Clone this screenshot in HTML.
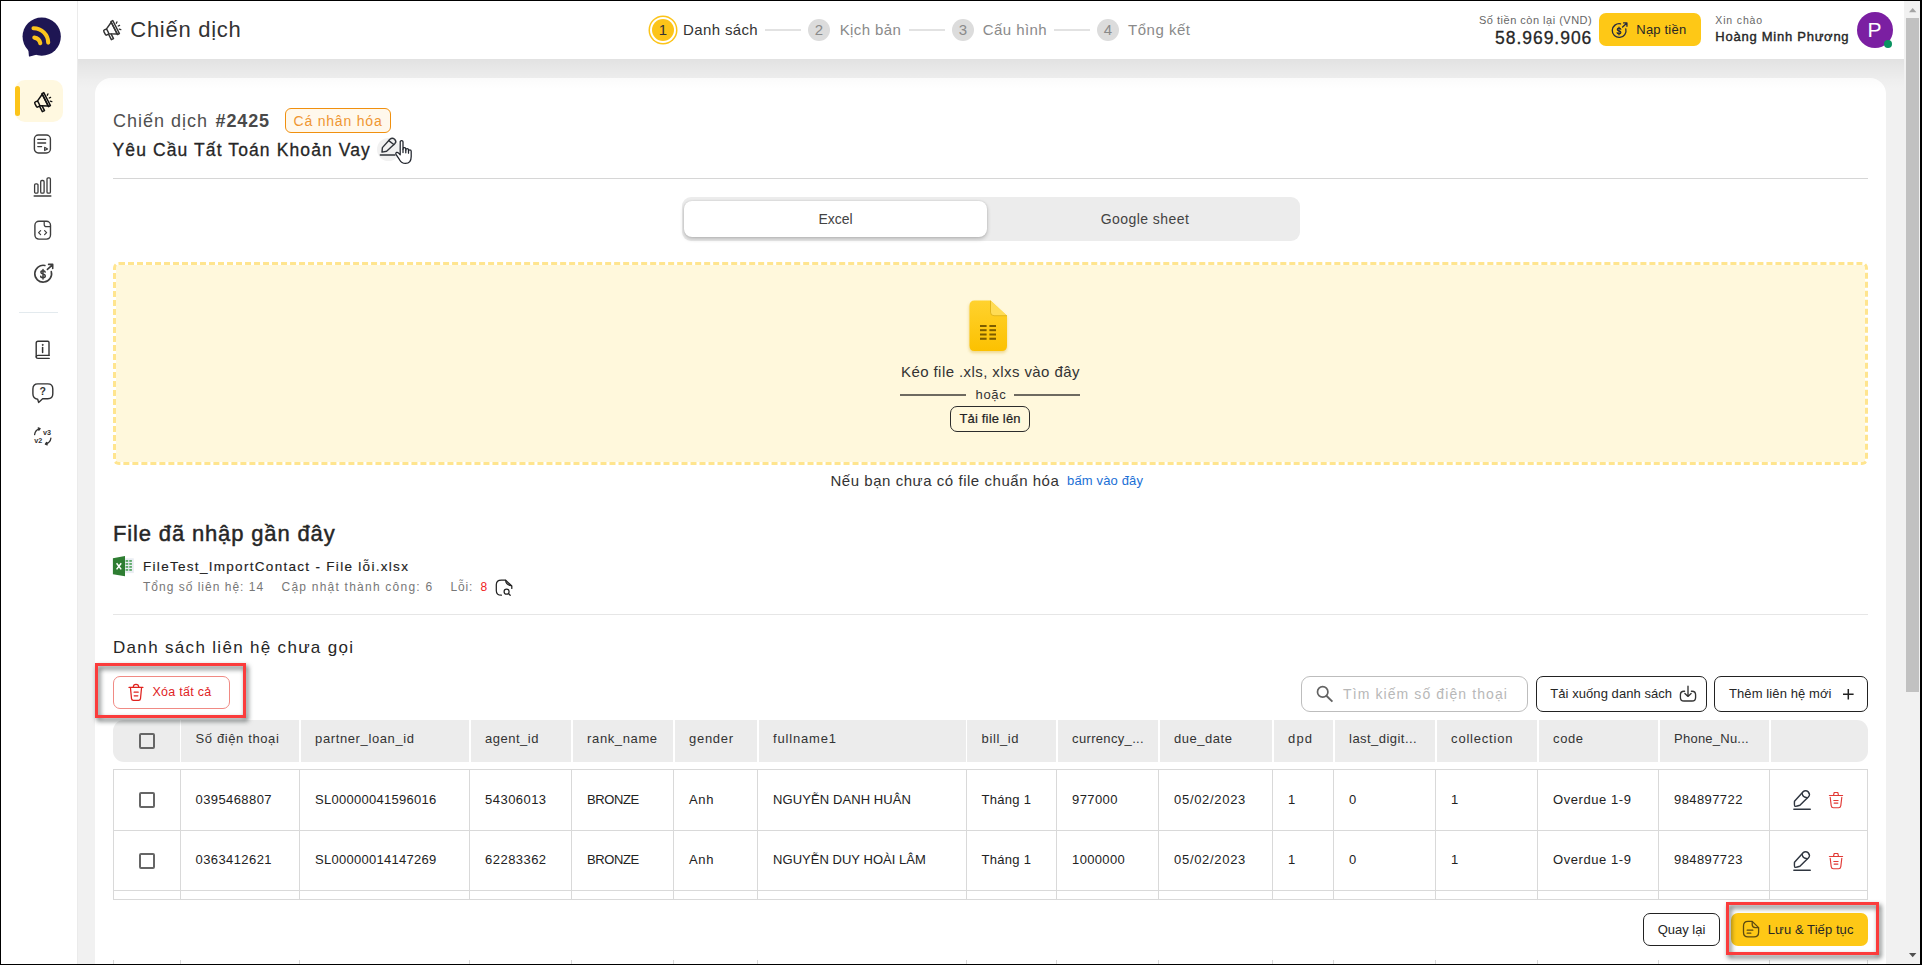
<!DOCTYPE html>
<html lang="vi">
<head>
<meta charset="utf-8">
<title>Chiến dịch</title>
<style>
*{box-sizing:border-box;margin:0;padding:0}
html,body{width:1922px;height:965px;overflow:hidden;background:#fff}
body{font-family:"Liberation Sans",sans-serif;color:#262626;position:relative}
.a{position:absolute}
.t{position:absolute;white-space:nowrap;line-height:20px;height:20px}
svg{display:block;overflow:visible}
.cb{width:16px;height:16px;border:2px solid #666;border-radius:2px}
.th{font-size:13px;color:#333}
.td{font-size:13px;color:#222}
/* frame */
#frame-t{left:0;top:0;width:1922px;height:1px;background:#000;z-index:50}
#frame-l{left:0;top:0;width:1px;height:965px;background:#000;z-index:50}
#frame-b{left:0;top:964px;width:1922px;height:1px;background:#000;z-index:50}
#frame-r{left:1920px;top:0;width:2px;height:965px;background:#000;z-index:50}
/* layout */
#main{left:78px;top:1px;width:1826px;height:963px;background:#f1f1f1}
#side{left:1px;top:1px;width:77px;height:963px;background:#fff;border-right:1px solid #ebebeb;z-index:5}
#head{left:78px;top:1px;width:1826px;height:58px;background:#fff;z-index:4}
#hshadow{left:78px;top:59px;width:1826px;height:30px;background:linear-gradient(rgba(0,0,0,.062),rgba(0,0,0,.034) 38%,rgba(0,0,0,.01) 72%,rgba(0,0,0,0));z-index:3}
#card{left:95px;top:78px;width:1791px;height:900px;background:#fff;border-radius:16px}
/* scrollbar */
#sb{left:1904px;top:1px;width:16px;height:963px;background:#f1f1f1;z-index:40}
#sbthumb{left:1906px;top:18px;width:13px;height:674px;background:#c1c1c1;z-index:41}
</style>
</head>
<body>
<div class="a" id="main"></div>
<div class="a" id="card"></div>
<div class="a" id="hshadow"></div>
<div class="a" id="head"></div>
<div class="a" id="side"></div>

<!-- SIDEBAR -->
<div class="a" style="left:0;top:0;z-index:6">
<!-- logo -->
<svg class="a" style="left:21px;top:16px" width="42" height="42" viewBox="0 0 42 42">
<path d="M8 33.5 L8.6 39.9 L15 38 Z" fill="#1e1653" stroke="#1e1653" stroke-width="1.4" stroke-linejoin="round"/>
<circle cx="20.7" cy="20.6" r="19.15" fill="#1e1653"/>
<path d="M12.5 12.2 A14.5 14.5 0 0 1 27.2 26.6" fill="none" stroke="#fcc41c" stroke-width="4.1" stroke-linecap="round"/>
<path d="M13.3 21.6 A7.2 7.2 0 0 1 19.3 27.2" fill="none" stroke="#fcc41c" stroke-width="4.1" stroke-linecap="round"/>
</svg>
<!-- active item -->
<div class="a" style="left:15px;top:80px;width:48px;height:42px;border-radius:10px;background:#fff8e0"></div>
<div class="a" style="left:15px;top:86px;width:5px;height:30px;border-radius:3px;background:#fcc419"></div>
<svg class="a" style="left:33px;top:91px" width="20" height="20" viewBox="0 0 20 20" fill="none" stroke="#111" stroke-width="1.5" stroke-linecap="round" stroke-linejoin="round">
<g id="mega"><g transform="rotate(-27 10 10)">
<rect x="1.6" y="7.4" width="3.6" height="5.6" rx="1.2"/>
<path d="M5.2 7.4 L12.4 3.6 L12.4 16.8 L5.2 13"/>
<path d="M14.5 2.9 L14.5 17.5 L12.4 17.5 L12.4 2.9 Z"/>
<path d="M4.6 13.2 L4.6 19.2 L7 19.2 L7 14.2"/>
<path d="M16.4 6.9 L17.6 5.9 M16.9 10.2 L18.4 10.2 M16.4 13.5 L17.6 14.5" stroke-width="1.3"/>
</g></g>
</svg>
<!-- script icon -->
<svg class="a" style="left:33px;top:134px" width="19" height="20" viewBox="0 0 19 20" fill="none" stroke="#3d3d3d" stroke-width="1.4" stroke-linecap="round" stroke-linejoin="round">
<rect x="1.4" y="1" width="16" height="18" rx="4"/>
<path d="M4.8 5.4 H12.6 M4.8 9 H12.6 M4.8 12.6 H8.6"/>
<path d="M11.6 13.2 L14.6 14.9 L11.6 16.6 Z" stroke-width="1.1"/>
</svg>
<!-- chart icon -->
<svg class="a" style="left:33px;top:177px" width="19" height="20" viewBox="0 0 19 20" fill="none" stroke="#3d3d3d" stroke-width="1.3" stroke-linecap="round" stroke-linejoin="round">
<rect x="1.6" y="6.8" width="3.4" height="9.4" rx="1.2"/>
<rect x="7.7" y="3.5" width="3.4" height="12.7" rx="1.2"/>
<rect x="14" y="0.9" width="3.4" height="15.3" rx="1.2"/>
<path d="M1.2 19 H17.8" stroke-width="1.5"/>
</svg>
<!-- code icon -->
<svg class="a" style="left:33px;top:220px" width="19" height="20" viewBox="0 0 19 20" fill="none" stroke="#3d3d3d" stroke-width="1.4" stroke-linecap="round" stroke-linejoin="round">
<rect x="1.9" y="1.3" width="15.6" height="17.8" rx="4"/>
<path d="M11.2 1.5 V4.4 Q11.2 6.6 13.4 6.6 H17.3" stroke-width="1.2"/>
<path d="M7.6 10.6 L5.6 12.6 L7.6 14.6 M11.6 10.6 L13.6 12.6 L11.6 14.6" stroke-width="1.2"/>
</svg>
<!-- dollar icon -->
<svg class="a" style="left:32px;top:262px" width="22" height="22" viewBox="0 0 22 22" fill="none" stroke="#3d3d3d" stroke-width="1.6" stroke-linecap="round" stroke-linejoin="round">
<path d="M19.3 9.6 A8.4 8.4 0 1 1 12.9 3.5"/>
<path d="M15.4 7.4 L20.4 2.8 M16.6 2.4 H20.7 V6.5"/>
<path d="M13.2 10.1 Q13 8.7 11 8.7 Q8.9 8.7 8.9 10.3 Q8.9 11.6 11 12.1 Q13.3 12.6 13.3 14.1 Q13.3 15.7 11 15.7 Q8.8 15.7 8.7 14.2 M11 7.5 V16.9" stroke-width="1.5"/>
</svg>
<div class="a" style="left:19px;top:312px;width:39px;height:1px;background:#e3eaee"></div>
<!-- book icon -->
<svg class="a" style="left:34px;top:340px" width="17" height="20" viewBox="0 0 17 20" fill="none" stroke="#333" stroke-width="1.4" stroke-linecap="round" stroke-linejoin="round">
<path d="M15 15.4 H4 Q2.2 15.4 2.2 17 Q2.2 18.4 4 18.4 H15.2"/>
<path d="M2.2 17 V3 Q2.2 1.2 4 1.2 H13.8 Q15 1.2 15 2.4 V15.4"/>
<path d="M8.6 7.6 V12.4" stroke-width="1.5"/><circle cx="8.6" cy="4.9" r="0.5" fill="#333" stroke-width="0.8"/>
</svg>
<!-- help icon -->
<svg class="a" style="left:32px;top:383px" width="22" height="21" viewBox="0 0 22 21" fill="none" stroke="#333" stroke-width="1.4" stroke-linecap="round" stroke-linejoin="round">
<path d="M5.9 0.9 H15.8 Q20.8 0.9 20.8 5.9 V10.8 Q20.8 15.8 15.8 15.8 H10.6 L6.6 19.4 L5.7 16.2 Q0.9 15.8 0.9 10.8 V5.9 Q0.9 0.9 5.9 0.9 Z"/>
<text x="10.6" y="12.4" font-family="Liberation Sans, sans-serif" font-size="10.5" font-weight="700" text-anchor="middle" fill="#333" stroke="none">?</text>
</svg>
<!-- version icon -->
<svg class="a" style="left:33px;top:427px" width="20" height="19" viewBox="0 0 20 19" fill="none" stroke="#333" stroke-width="1.4" stroke-linecap="round" stroke-linejoin="round">
<path d="M1.6 7.6 Q2.2 3 6.8 1.7 M5.2 0.9 L7.1 1.6 L5.9 3.2" stroke-width="1.3"/>
<path d="M17.9 11.2 Q17.3 15.8 12.7 17 M14.3 17.8 L12.4 17.1 L13.6 15.5" stroke-width="1.3"/>
<text x="13.9" y="7.6" font-family="Liberation Sans, sans-serif" font-size="7.2" font-weight="700" text-anchor="middle" fill="#333" stroke="none">v3</text>
<text x="5.3" y="16.2" font-family="Liberation Sans, sans-serif" font-size="7.2" font-weight="700" text-anchor="middle" fill="#333" stroke="none">v2</text>
</svg>
</div>
<!-- HEADER -->
<div class="a" style="left:0;top:0;z-index:7">
<svg class="a" style="left:102px;top:19.2px" width="20" height="20" viewBox="0 0 20 20" fill="none" stroke="#333" stroke-width="1.45" stroke-linecap="round" stroke-linejoin="round"><use href="#mega"/></svg>
<div class="t" style="left:130.3px;top:19.6px;font-size:22px;letter-spacing:0.72px;color:#333">Chiến dịch</div>
<!-- stepper -->
<div class="a" style="left:651.8px;top:19px;width:22px;height:22px;border-radius:50%;background:#fcc419;box-shadow:0 0 0 2px #fff,0 0 0 3.5px #fcc419"></div>
<div class="t" style="left:652.8px;top:20px;width:20px;text-align:center;font-size:15px;color:#333">1</div>
<div class="t" style="left:683px;top:20px;font-size:15px;letter-spacing:0.37px;color:#333">Danh sách</div>
<div class="a" style="left:765px;top:29px;width:36px;height:2px;background:#e2e2e2"></div>
<div class="a" style="left:808px;top:19px;width:22px;height:22px;border-radius:50%;background:#dcdcdc"></div>
<div class="t" style="left:809px;top:20px;width:20px;text-align:center;font-size:15px;color:#8a8a8a">2</div>
<div class="t" style="left:839.7px;top:20px;font-size:15px;letter-spacing:0.39px;color:#8a8a8a">Kịch bản</div>
<div class="a" style="left:909px;top:29px;width:36px;height:2px;background:#e2e2e2"></div>
<div class="a" style="left:952px;top:19px;width:22px;height:22px;border-radius:50%;background:#dcdcdc"></div>
<div class="t" style="left:953px;top:20px;width:20px;text-align:center;font-size:15px;color:#8a8a8a">3</div>
<div class="t" style="left:982.7px;top:20px;font-size:15px;letter-spacing:0.44px;color:#8a8a8a">Cấu hình</div>
<div class="a" style="left:1054px;top:29px;width:36px;height:2px;background:#e2e2e2"></div>
<div class="a" style="left:1097px;top:19px;width:22px;height:22px;border-radius:50%;background:#dcdcdc"></div>
<div class="t" style="left:1098px;top:20px;width:20px;text-align:center;font-size:15px;color:#8a8a8a">4</div>
<div class="t" style="left:1128px;top:20px;font-size:15px;letter-spacing:0.52px;color:#8a8a8a">Tổng kết</div>
<!-- right -->
<div class="t" style="left:1479px;top:10px;font-size:11px;letter-spacing:0.5px;color:#666">Số tiền còn lại (VND)</div>
<div class="t" style="left:1495px;top:28.2px;font-size:17.5px;letter-spacing:0.97px;color:#262626;-webkit-text-stroke:0.3px #262626">58.969.906</div>
<div class="a" style="left:1599px;top:13px;width:102px;height:33px;border-radius:7px;background:#fec816"></div>
<svg class="a" style="left:1610.3px;top:21px" width="18" height="18" viewBox="0 0 22 22" fill="none" stroke="#262a40" stroke-width="1.6" stroke-linecap="round" stroke-linejoin="round">
<path d="M19.3 9.6 A8.4 8.4 0 1 1 12.9 3.5"/>
<path d="M15.4 7.4 L20.4 2.8 M16.6 2.4 H20.7 V6.5"/>
<path d="M13.2 10.1 Q13 8.7 11 8.7 Q8.9 8.7 8.9 10.3 Q8.9 11.6 11 12.1 Q13.3 12.6 13.3 14.1 Q13.3 15.7 11 15.7 Q8.8 15.7 8.7 14.2 M11 7.5 V16.9" stroke-width="1.5"/>
</svg>
<div class="t" style="left:1636.3px;top:19.6px;font-size:13px;letter-spacing:0.2px;color:#262626">Nạp tiền</div>
<div class="t" style="left:1715.3px;top:10.2px;font-size:10.5px;letter-spacing:0.85px;color:#666">Xin chào</div>
<div class="t" style="left:1715.3px;top:26.5px;font-size:13px;letter-spacing:0.75px;color:#262626;-webkit-text-stroke:0.4px #262626">Hoàng Minh Phương</div>
<div class="a" style="left:1856.5px;top:12px;width:36px;height:36px;border-radius:50%;background:#7b1fa2"></div>
<div class="t" style="left:1856.5px;top:18px;width:36px;height:24px;line-height:24px;text-align:center;font-size:21px;color:#fff">P</div>
<div class="a" style="left:1884.3px;top:39.5px;width:8px;height:8px;border-radius:50%;background:#0a9361"></div>
</div>
<!-- CARD-TOP -->
<div class="t" style="left:113px;top:111px;font-size:18px;letter-spacing:0.99px;color:#505050">Chiến dịch</div>
<div class="t" style="left:215.5px;top:111px;font-size:18px;letter-spacing:0.88px;color:#4a4a4a;font-weight:700">#2425</div>
<div class="a" style="left:285px;top:108px;width:106px;height:25px;border-radius:6px;border:1.5px solid #f0900f;background:#fff8ec"></div>
<div class="t" style="left:293.5px;top:110.5px;font-size:14px;letter-spacing:0.8px;color:#ef9632">Cá nhân hóa</div>
<div class="t" style="left:112.5px;top:139.8px;font-size:17.5px;letter-spacing:1.11px;color:#262626;-webkit-text-stroke:0.3px #262626">Yêu Cầu Tất Toán Khoản Vay</div>
<div class="a" style="left:377px;top:138px;width:23px;height:23px;border-radius:50%;background:#f1f1f1"></div>
<svg class="a" style="left:379px;top:137px" width="19" height="20" viewBox="0 0 19 20" fill="none" stroke="#30343a" stroke-width="1.4" stroke-linecap="round" stroke-linejoin="round">
<path d="M3 15.1 L3.4 10.6 L10.9 2.3 Q13.2 0.2 15.6 2.2 Q17.8 4.4 16 6.4 L7.6 14.2 Z"/>
<path d="M9.7 3.6 L14.8 7.5"/>
<path d="M1.3 18 H15.9"/>
</svg>
<svg class="a" style="left:395px;top:140px" width="18" height="25" viewBox="0 0 18 25" fill="#fff" stroke="#20242c" stroke-width="1.25" stroke-linejoin="round" stroke-linecap="round">
<path d="M5.2 1.8 Q5.2 0.6 6.6 0.6 Q8 0.6 8 1.8 V9.2 Q8 7.7 9.4 7.7 Q10.8 7.7 10.8 9.2 V10.1 Q10.8 8.7 12.2 8.7 Q13.5 8.7 13.5 10.1 V11.1 Q13.5 9.8 14.8 9.8 Q16.2 9.8 16.2 11.2 V16.5 Q16.2 23.4 10.5 23.4 Q6.5 23.4 4.5 19.7 L1 14.4 Q0.3 13 1.5 12.4 Q2.6 12 3.6 13.1 L5.2 14.9 Z"/>
<path d="M8 9.2 V12.6 M10.8 10.1 V12.8 M13.5 11.1 V13.2" fill="none"/>
</svg>
<div class="a" style="left:113px;top:178px;width:1755px;height:1px;background:#d6d6d6"></div>
<!-- segmented -->
<div class="a" style="left:682px;top:197px;width:618px;height:44px;border-radius:9px;background:#ececec"></div>
<div class="a" style="left:684px;top:201px;width:303px;height:36px;border-radius:8px;background:#fff;box-shadow:0 2px 4px rgba(0,0,0,.22),0 0 2px rgba(0,0,0,.12)"></div>
<div class="t" style="left:684px;top:209px;width:303px;text-align:center;font-size:14px;color:#434343">Excel</div>
<div class="t" style="left:990px;top:209px;width:310px;text-align:center;font-size:14px;letter-spacing:0.43px;color:#434343">Google sheet</div>
<!-- DROPZONE -->
<div class="a" style="left:113px;top:262px;width:1755px;height:203px;border-radius:6px;border:3px dashed #ffe58f;background:#fff8dc;background-clip:padding-box"></div>
<svg class="a" style="left:963px;top:295px" width="50" height="64" viewBox="0 0 50 64">
<defs><linearGradient id="fg" x1="0" y1="0" x2="0" y2="1"><stop offset="0" stop-color="#ffd22e"/><stop offset="1" stop-color="#fcc100"/></linearGradient>
<filter id="fs" x="-30%" y="-30%" width="160%" height="160%"><feGaussianBlur stdDeviation="1.6"/></filter></defs>
<path d="M11.5 6 H27.5 L44 21 V51 Q44 56.5 38.5 56.5 H11.5 Q6 56.5 6 51 V11.5 Q6 6 11.5 6Z" fill="#d9b030" opacity=".45" filter="url(#fs)" transform="translate(0 1.5)"/>
<path d="M11.5 5.6 H27.5 L44 20.7 V50.5 Q44 56 38.5 56 H11.5 Q6.5 56 6.5 50.5 V11.1 Q6.5 5.6 11.5 5.6Z" fill="url(#fg)"/>
<path d="M27.5 5.6 L44 20.7 H31 Q27.5 20.7 27.5 17.2Z" fill="#ffdc55"/>
<path d="M27.5 5.6 V17.2 Q27.5 20.7 31 20.7 H44" fill="none" stroke="#c99a00" stroke-opacity=".55" stroke-width="1"/>
<g fill="#7c5d00"><rect x="17" y="30" width="6.6" height="2"/><rect x="26.4" y="30" width="6.6" height="2"/><rect x="17" y="34.2" width="6.6" height="2"/><rect x="26.4" y="34.2" width="6.6" height="2"/><rect x="17" y="38.5" width="6.6" height="2"/><rect x="26.4" y="38.5" width="6.6" height="2"/><rect x="17" y="42.7" width="6.6" height="2.1"/><rect x="26.4" y="42.7" width="6.6" height="2.1"/></g>
</svg>
<div class="t" style="left:901px;top:362px;font-size:15px;letter-spacing:0.42px;color:#333">Kéo file .xls, xlxs vào đây</div>
<div class="a" style="left:900px;top:394px;width:66px;height:2px;background:#6e6a60"></div>
<div class="a" style="left:1014px;top:394px;width:66px;height:2px;background:#6e6a60"></div>
<div class="t" style="left:975.5px;top:385px;font-size:13px;letter-spacing:0.7px;color:#333">hoặc</div>
<div class="a" style="left:950px;top:406px;width:80px;height:26px;border-radius:7px;border:1.5px solid #2c2c2c"></div>
<div class="t" style="left:959.5px;top:409px;font-size:13px;letter-spacing:0.16px;color:#222;-webkit-text-stroke:0.2px #222">Tải file lên</div>
<div class="t" style="left:830.5px;top:471px;font-size:15px;letter-spacing:0.54px;color:#333">Nếu bạn chưa có file chuẩn hóa</div>
<div class="t" style="left:1067px;top:470.5px;font-size:13px;letter-spacing:0.15px;color:#1a6fd6">bấm vào đây</div>
<!-- RECENT -->
<div class="t" style="left:113px;top:521px;height:26px;line-height:26px;font-size:22px;letter-spacing:0.85px;color:#262626;-webkit-text-stroke:0.45px #262626">File đã nhập gần đây</div>
<svg class="a" style="left:112px;top:555px" width="23" height="22" viewBox="0 0 23 22">
<rect x="12" y="3.3" width="9.8" height="14.8" fill="#e9edf2"/>
<g fill="#3d9a48"><rect x="13.6" y="5.2" width="2.6" height="1.5"/><rect x="17.3" y="5.2" width="2.6" height="1.5"/><rect x="13.6" y="8.2" width="2.6" height="1.5"/><rect x="17.3" y="8.2" width="2.6" height="1.5"/><rect x="13.6" y="11.2" width="2.6" height="1.5"/><rect x="17.3" y="11.2" width="2.6" height="1.5"/><rect x="13.6" y="14.2" width="2.6" height="1.5"/><rect x="17.3" y="14.2" width="2.6" height="1.5"/></g>
<path d="M0.9 3.3 L13 1 V21.3 L0.9 19.2Z" fill="#2e7d32"/>
<path d="M4.6 8.2 L9.2 14.4 M9.2 8.2 L4.6 14.4" stroke="#fff" stroke-width="1.5" fill="none"/>
</svg>
<div class="t" style="left:143px;top:557px;font-size:13.5px;letter-spacing:1.3px;color:#222;-webkit-text-stroke:0.15px #222">FileTest_ImportContact - File lỗi.xlsx</div>
<div class="t" style="left:143px;top:577px;font-size:12px;letter-spacing:1px;color:#777">Tổng số liên hệ: 14</div>
<div class="t" style="left:281.5px;top:577px;font-size:12px;letter-spacing:1.23px;color:#777">Cập nhật thành công: 6</div>
<div class="t" style="left:450.5px;top:577px;font-size:12px;letter-spacing:0.8px;color:#777">Lỗi:</div>
<div class="t" style="left:480.5px;top:577px;font-size:12px;color:#f02222">8</div>
<svg class="a" style="left:495px;top:578.7px" width="19" height="18" viewBox="0 0 19 18" fill="none" stroke="#222" stroke-width="1.25" stroke-linecap="round" stroke-linejoin="round">
<path d="M6.4 16.2 Q1.3 16.2 1.3 11.4 V5.8 Q1.3 1 6.4 1 H10.4 L16.8 7 V9.4"/>
<path d="M10.6 1.4 Q10.8 5.6 16.4 6.8" stroke-width="1.1"/>
<circle cx="11.6" cy="12.7" r="2.5"/><path d="M13.5 14.6 L15.2 16.3"/>
</svg>
<div class="a" style="left:113px;top:614px;width:1755px;height:1px;background:#e6e6e6"></div>
<div class="t" style="left:113px;top:637.5px;font-size:17px;letter-spacing:1.32px;color:#262626">Danh sách liên hệ chưa gọi</div>
<!-- LIST-TOOLS -->
<div class="a" style="left:113px;top:676px;width:117px;height:33px;border-radius:7px;border:1px solid #f08a84;background:#fff"></div>
<svg class="a" id="trash0" style="left:128px;top:683px" width="16" height="19" viewBox="0 0 16 19" fill="none" stroke="#e0231f" stroke-width="1.25" stroke-linecap="round" stroke-linejoin="round">
<path d="M1 4.4 H14.9"/><path d="M5.2 4.2 Q5.4 1.3 8 1.3 Q10.6 1.3 10.8 4.2" />
<path d="M2.5 5.2 L3.5 15.6 Q3.7 17.3 5.4 17.3 H10.6 Q12.3 17.3 12.5 15.6 L13.5 5.2"/>
<path d="M6.1 9.2 H10.2 M6.2 12.8 H9.8"/>
</svg>
<div class="t" style="left:152.5px;top:682px;font-size:12.5px;letter-spacing:0.28px;color:#e0231f">Xóa tất cả</div>
<div class="a" style="left:95px;top:663px;width:151px;height:55px;border:3px solid #fb3c3c;filter:drop-shadow(2px 3px 2.5px rgba(20,30,30,.7));z-index:30"></div>
<!-- search -->
<div class="a" style="left:1301px;top:676px;width:227px;height:36px;border-radius:9px;border:1px solid #bdbdbd;background:#fff"></div>
<svg class="a" style="left:1315px;top:684px" width="20" height="20" viewBox="0 0 20 20" fill="none" stroke="#636363" stroke-width="1.7" stroke-linecap="butt"><circle cx="7.7" cy="7.9" r="5.2"/><path d="M11.4 11.7 L17.4 17.6" stroke-width="1.9"/></svg>
<div class="t" style="left:1343px;top:684px;font-size:14px;letter-spacing:1.1px;color:#b8b8b8">Tìm kiếm số điện thoại</div>
<!-- download -->
<div class="a" style="left:1536px;top:676px;width:171px;height:36px;border-radius:7px;border:1.5px solid #222;background:#fff"></div>
<div class="t" style="left:1550.3px;top:684px;font-size:13px;letter-spacing:0.06px;color:#262626">Tải xuống danh sách</div>
<svg class="a" style="left:1679px;top:685px" width="18" height="18" viewBox="0 0 18 18" fill="none" stroke="#333" stroke-width="1.35" stroke-linecap="round" stroke-linejoin="round">
<path d="M5.6 6.2 H5 Q1.4 6.2 1.4 9.8 V12.4 Q1.4 16 5 16 H13 Q16.6 16 16.6 12.4 V9.8 Q16.6 6.2 13 6.2 H12.4"/>
<path d="M9 1.2 V11.2 M5.9 8.4 L9 11.4 L12.1 8.4"/>
</svg>
<!-- add -->
<div class="a" style="left:1714px;top:676px;width:154px;height:36px;border-radius:7px;border:1.5px solid #222;background:#fff"></div>
<div class="t" style="left:1729px;top:684px;font-size:13px;letter-spacing:0.1px;color:#262626">Thêm liên hệ mới</div>
<svg class="a" style="left:1843px;top:689px" width="11" height="11" viewBox="0 0 11 11" fill="none" stroke="#222" stroke-width="1.5"><path d="M5.3 0 V10.6 M0 5.3 H10.6"/></svg>
<!-- TABLE -->
<div class="a" style="left:113px;top:719.5px;width:1754.5px;height:42px;border-radius:11px;background:#ececec"></div>
<div class="a" style="left:179.5px;top:719px;width:1.5px;height:43px;background:#fff"></div><div class="a" style="left:299.0px;top:719px;width:1.5px;height:43px;background:#fff"></div><div class="a" style="left:469.0px;top:719px;width:1.5px;height:43px;background:#fff"></div><div class="a" style="left:571.0px;top:719px;width:1.5px;height:43px;background:#fff"></div><div class="a" style="left:673.0px;top:719px;width:1.5px;height:43px;background:#fff"></div><div class="a" style="left:757.0px;top:719px;width:1.5px;height:43px;background:#fff"></div><div class="a" style="left:965.5px;top:719px;width:1.5px;height:43px;background:#fff"></div><div class="a" style="left:1056.0px;top:719px;width:1.5px;height:43px;background:#fff"></div><div class="a" style="left:1158.0px;top:719px;width:1.5px;height:43px;background:#fff"></div><div class="a" style="left:1272.0px;top:719px;width:1.5px;height:43px;background:#fff"></div><div class="a" style="left:1333.0px;top:719px;width:1.5px;height:43px;background:#fff"></div><div class="a" style="left:1435.0px;top:719px;width:1.5px;height:43px;background:#fff"></div><div class="a" style="left:1537.0px;top:719px;width:1.5px;height:43px;background:#fff"></div><div class="a" style="left:1658.0px;top:719px;width:1.5px;height:43px;background:#fff"></div><div class="a" style="left:1769.0px;top:719px;width:1.5px;height:43px;background:#fff"></div>
<div class="a cb" style="left:139px;top:733px"></div>
<div class="t th" style="left:195.6px;top:728.7px;letter-spacing:0.61px">Số điện thoại</div><div class="t th" style="left:315.1px;top:728.7px;letter-spacing:0.61px">partner_loan_id</div><div class="t th" style="left:485.1px;top:728.7px;letter-spacing:0.49px">agent_id</div><div class="t th" style="left:587.1px;top:728.7px;letter-spacing:0.62px">rank_name</div><div class="t th" style="left:689.1px;top:728.7px;letter-spacing:0.68px">gender</div><div class="t th" style="left:773.1px;top:728.7px;letter-spacing:0.82px">fullname1</div><div class="t th" style="left:981.6px;top:728.7px;letter-spacing:0.61px">bill_id</div><div class="t th" style="left:1072.1px;top:728.7px;letter-spacing:0.33px">currency_...</div><div class="t th" style="left:1174.1px;top:728.7px;letter-spacing:0.52px">due_date</div><div class="t th" style="left:1288.1px;top:728.7px;letter-spacing:1.1px">dpd</div><div class="t th" style="left:1349.1px;top:728.7px;letter-spacing:0.45px">last_digit...</div><div class="t th" style="left:1451.1px;top:728.7px;letter-spacing:0.79px">collection</div><div class="t th" style="left:1553.1px;top:728.7px;letter-spacing:0.6px">code</div><div class="t th" style="left:1674.1px;top:728.7px;letter-spacing:0.23px">Phone_Nu...</div>
<div class="a" style="left:113px;top:769px;width:1755px;height:131px;border:1px solid #d9d9d9;overflow:hidden"></div>
<div class="a" style="left:179.5px;top:769px;width:1px;height:131px;background:#d9d9d9"></div><div class="a" style="left:299.0px;top:769px;width:1px;height:131px;background:#d9d9d9"></div><div class="a" style="left:469.0px;top:769px;width:1px;height:131px;background:#d9d9d9"></div><div class="a" style="left:571.0px;top:769px;width:1px;height:131px;background:#d9d9d9"></div><div class="a" style="left:673.0px;top:769px;width:1px;height:131px;background:#d9d9d9"></div><div class="a" style="left:757.0px;top:769px;width:1px;height:131px;background:#d9d9d9"></div><div class="a" style="left:965.5px;top:769px;width:1px;height:131px;background:#d9d9d9"></div><div class="a" style="left:1056.0px;top:769px;width:1px;height:131px;background:#d9d9d9"></div><div class="a" style="left:1158.0px;top:769px;width:1px;height:131px;background:#d9d9d9"></div><div class="a" style="left:1272.0px;top:769px;width:1px;height:131px;background:#d9d9d9"></div><div class="a" style="left:1333.0px;top:769px;width:1px;height:131px;background:#d9d9d9"></div><div class="a" style="left:1435.0px;top:769px;width:1px;height:131px;background:#d9d9d9"></div><div class="a" style="left:1537.0px;top:769px;width:1px;height:131px;background:#d9d9d9"></div><div class="a" style="left:1658.0px;top:769px;width:1px;height:131px;background:#d9d9d9"></div><div class="a" style="left:1769.0px;top:769px;width:1px;height:131px;background:#d9d9d9"></div>
<div class="a" style="left:113px;top:829.5px;width:1755px;height:1px;background:#d9d9d9"></div><div class="a" style="left:113px;top:890px;width:1755px;height:1px;background:#d9d9d9"></div>
<div class="a cb" style="left:139px;top:792px"></div><div class="t td" style="left:195.6px;top:789.8px;letter-spacing:0.4px">0395468807</div><div class="t td" style="left:315.1px;top:789.8px;letter-spacing:0.27px">SL00000041596016</div><div class="t td" style="left:485.1px;top:789.8px;letter-spacing:0.45px">54306013</div><div class="t td" style="left:587.1px;top:789.8px;letter-spacing:-0.43px">BRONZE</div><div class="t td" style="left:689.1px;top:789.8px;letter-spacing:0.58px">Anh</div><div class="t td" style="left:773.1px;top:789.8px;letter-spacing:0.09px">NGUYỄN DANH HUÂN</div><div class="t td" style="left:981.6px;top:789.8px;letter-spacing:0.27px">Tháng 1</div><div class="t td" style="left:1072.1px;top:789.8px;letter-spacing:0.38px">977000</div><div class="t td" style="left:1174.1px;top:789.8px;letter-spacing:0.68px">05/02/2023</div><div class="t td" style="left:1288.1px;top:789.8px;letter-spacing:0px">1</div><div class="t td" style="left:1349.1px;top:789.8px;letter-spacing:0px">0</div><div class="t td" style="left:1451.1px;top:789.8px;letter-spacing:0px">1</div><div class="t td" style="left:1553.1px;top:789.8px;letter-spacing:0.56px">Overdue 1-9</div><div class="t td" style="left:1674.1px;top:789.8px;letter-spacing:0.4px">984897722</div><svg class="a" style="left:1792px;top:789.0px" width="20" height="22" viewBox="0 0 20 22" fill="none" stroke="#2f3640" stroke-width="1.45" stroke-linecap="round" stroke-linejoin="round"><path d="M2.9 17.2 Q2.2 16.6 2.5 12.3 L10.9 2.9 Q13.6 0.4 16.3 2.9 Q18.6 5.4 16.3 7.9 L7.9 16.3 Q3.6 17.8 2.9 17.2Z"/><path d="M10.2 4.4 Q10.6 8.4 15.2 8.6" stroke-width="1.3"/><path d="M1.9 20.2 H18.2" stroke-width="1.6"/></svg><svg class="a" style="left:1828px;top:791.0px" width="16" height="18" viewBox="0 0 16 18" fill="none" stroke="#e23a36" stroke-width="1.15" stroke-linecap="round" stroke-linejoin="round"><path d="M1.4 4.5 H14.6"/><path d="M5.5 4.3 L6.2 1.5 H9.8 L10.5 4.3"/><path d="M2.2 6.3 L3.2 14.6 Q3.5 16.7 5.4 16.7 H10.6 Q12.5 16.7 12.8 14.6 L13.8 6.3"/><path d="M5.8 9.5 H10.1 M6.1 12.1 H9.9"/></svg>
<div class="a cb" style="left:139px;top:852.5px"></div><div class="t td" style="left:195.6px;top:849.9px;letter-spacing:0.4px">0363412621</div><div class="t td" style="left:315.1px;top:849.9px;letter-spacing:0.27px">SL00000014147269</div><div class="t td" style="left:485.1px;top:849.9px;letter-spacing:0.45px">62283362</div><div class="t td" style="left:587.1px;top:849.9px;letter-spacing:-0.43px">BRONZE</div><div class="t td" style="left:689.1px;top:849.9px;letter-spacing:0.58px">Anh</div><div class="t td" style="left:773.1px;top:849.9px;letter-spacing:0.03px">NGUYỄN DUY HOÀI LÂM</div><div class="t td" style="left:981.6px;top:849.9px;letter-spacing:0.27px">Tháng 1</div><div class="t td" style="left:1072.1px;top:849.9px;letter-spacing:0.33px">1000000</div><div class="t td" style="left:1174.1px;top:849.9px;letter-spacing:0.68px">05/02/2023</div><div class="t td" style="left:1288.1px;top:849.9px;letter-spacing:0px">1</div><div class="t td" style="left:1349.1px;top:849.9px;letter-spacing:0px">0</div><div class="t td" style="left:1451.1px;top:849.9px;letter-spacing:0px">1</div><div class="t td" style="left:1553.1px;top:849.9px;letter-spacing:0.56px">Overdue 1-9</div><div class="t td" style="left:1674.1px;top:849.9px;letter-spacing:0.4px">984897723</div><svg class="a" style="left:1792px;top:849.5px" width="20" height="22" viewBox="0 0 20 22" fill="none" stroke="#2f3640" stroke-width="1.45" stroke-linecap="round" stroke-linejoin="round"><path d="M2.9 17.2 Q2.2 16.6 2.5 12.3 L10.9 2.9 Q13.6 0.4 16.3 2.9 Q18.6 5.4 16.3 7.9 L7.9 16.3 Q3.6 17.8 2.9 17.2Z"/><path d="M10.2 4.4 Q10.6 8.4 15.2 8.6" stroke-width="1.3"/><path d="M1.9 20.2 H18.2" stroke-width="1.6"/></svg><svg class="a" style="left:1828px;top:851.5px" width="16" height="18" viewBox="0 0 16 18" fill="none" stroke="#e23a36" stroke-width="1.15" stroke-linecap="round" stroke-linejoin="round"><path d="M1.4 4.5 H14.6"/><path d="M5.5 4.3 L6.2 1.5 H9.8 L10.5 4.3"/><path d="M2.2 6.3 L3.2 14.6 Q3.5 16.7 5.4 16.7 H10.6 Q12.5 16.7 12.8 14.6 L13.8 6.3"/><path d="M5.8 9.5 H10.1 M6.1 12.1 H9.9"/></svg>
<div class="a" style="left:113px;top:960px;width:1px;height:5px;background:#d9d9d9"></div><div class="a" style="left:179.5px;top:960px;width:1px;height:5px;background:#d9d9d9"></div><div class="a" style="left:299.0px;top:960px;width:1px;height:5px;background:#d9d9d9"></div><div class="a" style="left:469.0px;top:960px;width:1px;height:5px;background:#d9d9d9"></div><div class="a" style="left:571.0px;top:960px;width:1px;height:5px;background:#d9d9d9"></div><div class="a" style="left:673.0px;top:960px;width:1px;height:5px;background:#d9d9d9"></div><div class="a" style="left:757.0px;top:960px;width:1px;height:5px;background:#d9d9d9"></div><div class="a" style="left:965.5px;top:960px;width:1px;height:5px;background:#d9d9d9"></div><div class="a" style="left:1056.0px;top:960px;width:1px;height:5px;background:#d9d9d9"></div><div class="a" style="left:1158.0px;top:960px;width:1px;height:5px;background:#d9d9d9"></div><div class="a" style="left:1272.0px;top:960px;width:1px;height:5px;background:#d9d9d9"></div><div class="a" style="left:1333.0px;top:960px;width:1px;height:5px;background:#d9d9d9"></div><div class="a" style="left:1435.0px;top:960px;width:1px;height:5px;background:#d9d9d9"></div><div class="a" style="left:1537.0px;top:960px;width:1px;height:5px;background:#d9d9d9"></div><div class="a" style="left:1658.0px;top:960px;width:1px;height:5px;background:#d9d9d9"></div><div class="a" style="left:1769.0px;top:960px;width:1px;height:5px;background:#d9d9d9"></div><div class="a" style="left:1867px;top:960px;width:1px;height:5px;background:#d9d9d9"></div>
<!-- FOOTER -->
<div class="a" style="left:1643px;top:913px;width:77px;height:33px;border-radius:7px;border:1.5px solid #222;background:#fff"></div>
<div class="t" style="left:1643px;top:919.5px;width:77px;text-align:center;font-size:13px;letter-spacing:0px;color:#262626">Quay lại</div>
<div class="a" style="left:1731px;top:913px;width:137px;height:33px;border-radius:7px;background:#fec816"></div>
<svg class="a" style="left:1742px;top:920px" width="18" height="18" viewBox="0 0 18 18" fill="none" stroke="#5c4a12" stroke-width="1.3" stroke-linecap="round" stroke-linejoin="round">
<path d="M10.2 1.4 H6 Q1.5 1.4 1.5 6 V12.2 Q1.5 16.8 6 16.8 H12 Q16.6 16.8 16.6 12.2 V7.6 Z"/>
<path d="M10.2 1.6 V4.6 Q10.2 7.6 13.2 7.6 H16.4"/>
<path d="M5.2 10.2 H10.8 M5.2 13.2 H8.8"/>
</svg>
<div class="t" style="left:1767.8px;top:919.5px;font-size:13px;letter-spacing:0.08px;color:#262626">Lưu &amp; Tiếp tục</div>
<div class="a" style="left:1726px;top:902px;width:153px;height:53px;border:3px solid #fb3c3c;filter:drop-shadow(2px 3px 2.5px rgba(20,30,30,.7));z-index:30"></div>

<div class="a" id="sb"></div>
<div class="a" id="sbthumb"></div>
<svg class="a" style="left:1909px;top:7.7px;z-index:42" width="7.4" height="4.2" viewBox="0 0 9 5"><path d="M0 5 L4.5 0 L9 5Z" fill="#a3a3a3"/></svg>
<svg class="a" style="left:1908.8px;top:953px;z-index:42" width="7.4" height="4.2" viewBox="0 0 9 5"><path d="M0 0 L4.5 5 L9 0Z" fill="#505050"/></svg>
<div class="a" id="frame-t"></div><div class="a" id="frame-l"></div><div class="a" id="frame-b"></div><div class="a" id="frame-r"></div>
</body>
</html>
